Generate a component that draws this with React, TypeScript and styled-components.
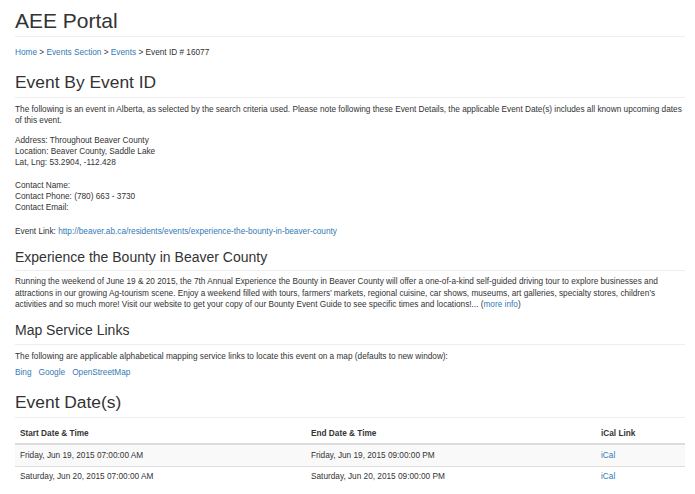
import React from "react";
import styled, { createGlobalStyle } from "styled-components";

const Global = createGlobalStyle`
  html, body { margin: 0; padding: 0; background: #fff; }
  body {
    font-family: "Liberation Sans", Arial, Helvetica, sans-serif;
    font-size: 8.25px;
    line-height: 11.2px;
    color: #333;
  }
  * { box-sizing: border-box; }
`;

const Container = styled.div`
  padding: 0 10px 1px 15px;
`;

const HeaderBlock = styled.div<{ $mt: number; $pb: number }>`
  margin-top: ${(p) => p.$mt}px;
  padding-bottom: ${(p) => p.$pb}px;
  border-bottom: 1px solid #eee;
`;

const Heading = styled.div<{ $size: number }>`
  font-size: ${(p) => p.$size}px;
  line-height: 1.1;
  font-weight: 500;
  color: #333;
`;

const Para = styled.p<{ $mt: number }>`
  margin: ${(p) => p.$mt}px 0 0 0;
`;

const Link = styled.a`
  color: #337ab7;
  text-decoration: none;
`;

const Sep = styled.span`
  color: #333;
`;

const LinkRow = styled.div`
  margin-top: 5.5px;
  display: flex;
  gap: 7px;
`;

const Table = styled.table`
  margin-top: 5.5px;
  width: 670px;
  border-collapse: collapse;
  table-layout: fixed;
`;

const Th = styled.th`
  text-align: left;
  font-weight: bold;
  padding: 4.6px 5px;
  border-bottom: 2px solid #ddd;
`;

const Row = styled.tr<{ $striped: boolean }>`
  background: ${(p) => (p.$striped ? "#f9f9f9" : "transparent")};
`;

const Td = styled.td`
  padding: 4.6px 5px;
  border-top: 1px solid #ddd;
`;

const dates = [
  ["Friday, Jun 19, 2015 07:00:00 AM", "Friday, Jun 19, 2015 09:00:00 PM"],
  ["Saturday, Jun 20, 2015 07:00:00 AM", "Saturday, Jun 20, 2015 09:00:00 PM"],
];

export default function App() {
  return (
    <>
      <Global />
      <Container>
        <HeaderBlock $mt={9} $pb={4}>
          <Heading $size={21}>AEE Portal</Heading>
        </HeaderBlock>

        <Para $mt={10}>
          <Link href="#">Home</Link>
          <Sep> &gt; </Sep>
          <Link href="#">Events Section</Link>
          <Sep> &gt; </Sep>
          <Link href="#">Events</Link>
          <Sep> &gt; </Sep>
          Event ID # 16077
        </Para>

        <HeaderBlock $mt={14.4} $pb={5.5}>
          <Heading $size={17.4}>Event By Event ID</Heading>
        </HeaderBlock>

        <Para $mt={5.4}>
          The following is an event in Alberta, as selected by the search criteria used. Please note following
          these Event Details, the applicable Event Date(s) includes all known upcoming dates
          <br />
          of this event.
        </Para>

        <Para $mt={8.6}>
          Address: Throughout Beaver County
          <br />
          Location: Beaver County, Saddle Lake
          <br />
          Lat, Lng: 53.2904, -112.428
          <br />
          <br />
          Contact Name:
          <br />
          Contact Phone: (780) 663 - 3730
          <br />
          Contact Email:
        </Para>

        <Para $mt={12.6}>
          Event Link:{" "}
          <Link href="#">http://beaver.ab.ca/residents/events/experience-the-bounty-in-beaver-county</Link>
        </Para>

        <HeaderBlock $mt={12.6} $pb={5.4}>
          <Heading $size={14}>Experience the Bounty in Beaver County</Heading>
        </HeaderBlock>

        <Para $mt={5}>
          Running the weekend of June 19 &amp; 20 2015, the 7th Annual Experience the Bounty in Beaver County will
          offer a one-of-a-kind self-guided driving tour to explore businesses and
          <br />
          attractions in our growing Ag-tourism scene. Enjoy a weekend filled with tours, farmers’ markets,
          regional cuisine, car shows, museums, art galleries, specialty stores, children’s
          <br />
          activities and so much more! Visit our website to get your copy of our Bounty Event Guide to see specific
          times and locations!... (<Link href="#">more info</Link>)
        </Para>

        <HeaderBlock $mt={13.5} $pb={5.5}>
          <Heading $size={14}>Map Service Links</Heading>
        </HeaderBlock>

        <Para $mt={5.4}>
          The following are applicable alphabetical mapping service links to locate this event on a map (defaults
          to new window):
        </Para>

        <LinkRow>
          <Link href="#">Bing</Link>
          <Link href="#">Google</Link>
          <Link href="#">OpenStreetMap</Link>
        </LinkRow>

        <HeaderBlock $mt={14} $pb={4.8}>
          <Heading $size={17.4}>Event Date(s)</Heading>
        </HeaderBlock>

        <Table>
          <colgroup>
            <col style={{ width: 291 }} />
            <col style={{ width: 290 }} />
            <col style={{ width: 89 }} />
          </colgroup>
          <thead>
            <tr>
              <Th>Start Date &amp; Time</Th>
              <Th>End Date &amp; Time</Th>
              <Th>iCal Link</Th>
            </tr>
          </thead>
          <tbody>
            {dates.map(([s, e], i) => (
              <Row key={i} $striped={i % 2 === 0}>
                <Td>{s}</Td>
                <Td>{e}</Td>
                <Td>
                  <Link href="#">iCal</Link>
                </Td>
              </Row>
            ))}
          </tbody>
        </Table>
      </Container>
    </>
  );
}
